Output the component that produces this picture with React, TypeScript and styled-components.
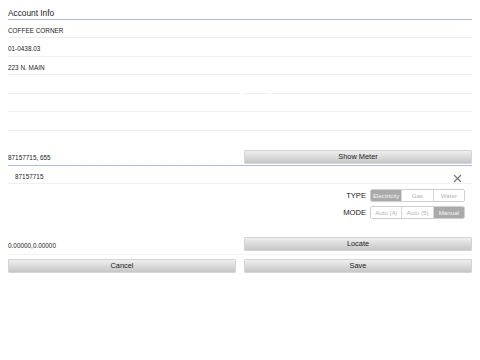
import React from 'react';
import styled, { createGlobalStyle } from 'styled-components';

const GlobalStyle = createGlobalStyle`
  html, body {
    margin: 0;
    padding: 0;
    background: #fff;
  }
  body {
    font-family: "Liberation Sans", Arial, sans-serif;
    color: #1a1a1a;
  }
`;

const Page = styled.div`
  width: 480px;
  height: 360px;
  padding: 0 8px;
  box-sizing: border-box;
`;

const Header = styled.div`
  height: 19.5px;
  display: flex;
  align-items: flex-end;
  padding-bottom: 0.5px;
  box-sizing: border-box;
  font-size: 8.3px;
  border-bottom: 1px solid #a9bbdf;
`;

const Row = styled.div`
  height: 18.6px;
  box-sizing: border-box;
  padding-top: 4px;
  display: flex;
  align-items: center;
  font-size: 6.4px;
  border-bottom: 1px solid #efefef;
`;

const SplitRow = styled.div`
  height: 18.6px;
  display: flex;
  gap: 4px;
`;

const Cell = styled.div<{ $w?: number }>`
  flex: ${(p) => (p.$w ? `0 0 ${p.$w}px` : '1')};
  border-bottom: 1px solid #efefef;
  & + & + & {
    margin-left: -1px;
  }
`;

const Spacer = styled.div<{ $h: number }>`
  height: ${(p) => p.$h}px;
`;

const Pair = styled.div`
  display: grid;
  grid-template-columns: 1fr 1fr;
  column-gap: 8px;
  align-items: center;
`;

const Value = styled.div`
  font-size: 6.4px;
  align-self: center;
`;

const Button = styled.button`
  height: 14px;
  padding: 0;
  border: 1px solid #d4d4d4;
  border-radius: 1px;
  background: linear-gradient(#efefef, #c6c6c6);
  font-family: "Liberation Sans", Arial, sans-serif;
  font-size: 7.4px;
  color: #1a1a1a;
`;

const MeterRow = styled(Pair)`
  height: 15px;
  align-items: start;
  border-bottom: 1px solid #a9bbdf;
`;

const IdRow = styled.div`
  height: 18px;
  box-sizing: border-box;
  padding: 4px 0 0 7px;
  display: flex;
  align-items: center;
  justify-content: space-between;
  font-size: 6.4px;
  border-bottom: 1px solid #efefef;
`;

const Close = styled.span`
  width: 9px;
  height: 9px;
  margin-right: 10px;
  margin-top: 5px;
  display: flex;
`;

const OptionRow = styled.div`
  display: flex;
  justify-content: flex-end;
  align-items: center;
  gap: 4px;
  padding-right: 7px;
  height: 13px;
  margin-bottom: 4px;
`;

const OptionLabel = styled.span`
  font-size: 7.6px;
`;

const Segmented = styled.div`
  display: flex;
  width: 95px;
  height: 13px;
  border: 1px solid #cfcfcf;
  border-radius: 2px;
  box-sizing: border-box;
  overflow: hidden;
`;

const Segment = styled.div<{ $on?: boolean }>`
  flex: 1;
  display: flex;
  align-items: center;
  justify-content: center;
  font-size: 6.2px;
  color: ${(p) => (p.$on ? '#f4f4f4' : '#b4b4b4')};
  background: ${(p) => (p.$on ? '#aaaaaa' : '#fff')};
  & + & {
    border-left: 1px solid #d8d8d8;
  }
`;

const CoordRow = styled(Pair)`
  height: 17px;
  align-items: start;
  border-bottom: 1px solid #f4f4f4;
`;

const ActionRow = styled(Pair)`
  margin-top: 4px;
`;

function CloseIcon() {
  return (
    <svg width="9" height="9" viewBox="0 0 9 9">
      <path d="M1 1 L8 8 M8 1 L1 8" stroke="#777" strokeWidth="1.2" />
    </svg>
  );
}

export default function App() {
  return (
    <Page>
      <GlobalStyle />
      <Header>Account Info</Header>
      <Row>COFFEE CORNER</Row>
      <Row>01-0438.03</Row>
      <Row>223 N. MAIN</Row>
      <SplitRow>
        <Cell $w={232} />
        <Cell $w={24} />
        <Cell />
      </SplitRow>
      <Row />
      <Row />
      <Spacer $h={18.5} />
      <MeterRow>
        <Value>87157715, 655</Value>
        <Button>Show Meter</Button>
      </MeterRow>
      <IdRow>
        87157715
        <Close>
          <CloseIcon />
        </Close>
      </IdRow>
      <Spacer $h={5} />
      <OptionRow>
        <OptionLabel>TYPE</OptionLabel>
        <Segmented>
          <Segment $on>Electricity</Segment>
          <Segment>Gas</Segment>
          <Segment>Water</Segment>
        </Segmented>
      </OptionRow>
      <OptionRow>
        <OptionLabel>MODE</OptionLabel>
        <Segmented>
          <Segment>Auto (4)</Segment>
          <Segment>Auto (5)</Segment>
          <Segment $on>Manual</Segment>
        </Segmented>
      </OptionRow>
      <Spacer $h={14} />
      <CoordRow>
        <Value>0.00000,0.00000</Value>
        <Button>Locate</Button>
      </CoordRow>
      <ActionRow>
        <Button>Cancel</Button>
        <Button>Save</Button>
      </ActionRow>
    </Page>
  );
}
